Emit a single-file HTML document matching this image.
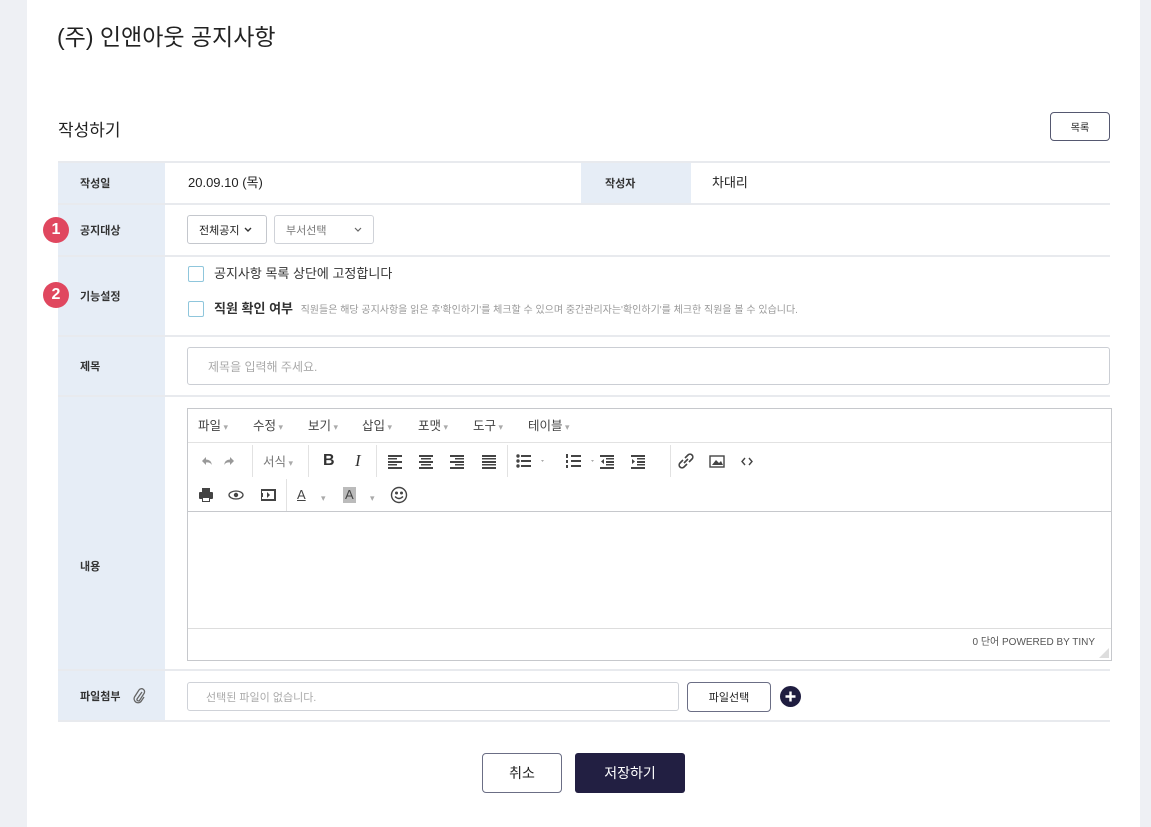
<!DOCTYPE html>
<html><head><meta charset="utf-8"><style>
*{margin:0;padding:0;box-sizing:border-box}
body{width:1151px;height:827px;background:#fff;position:relative;overflow:hidden;font-family:"Liberation Sans","Noto Sans CJK KR",sans-serif;color:#222}
.a{position:absolute}
.lbl{position:absolute;left:58px;width:107px;background:#e6edf6;font-size:11px;font-weight:bold;color:#333;display:flex;align-items:center;padding-left:22px}
.hl{position:absolute;left:58px;width:1052px;height:2px;background:#e8eaee}
.box{position:absolute;border:1px solid #cfd2d8;border-radius:3px;background:#fff;display:flex;align-items:center}
.cb{position:absolute;width:16px;height:16px;border:1.5px solid #8fc6dc;border-radius:2px;background:#fff}
.num{position:absolute;left:43px;width:26px;height:26px;border-radius:50%;background:#e0475f;color:#fff;font-size:16px;font-weight:bold;text-align:center;line-height:26px}
.tb{position:absolute;font-size:13px;color:#444;line-height:16px}
.m{position:absolute;top:9px;font-size:12.5px;color:#444;line-height:16px}
.g{color:#aaa;font-size:9px}
.sep{position:absolute;width:1px;height:32px;background:#e2e2e2}
svg.i{position:absolute}
</style></head><body>
<div class="a" style="left:0;top:0;width:27px;height:827px;background:#eef0f4"></div>
<div class="a" style="left:1140px;top:0;width:11px;height:827px;background:#eef0f4"></div>
<div class="a" style="left:57px;top:18px;font-size:23px;color:#222">(주) 인앤아웃 공지사항</div>
<div class="a" style="left:58px;top:116px;font-size:17px;color:#222">작성하기</div>
<div class="box" style="left:1050px;top:112px;width:60px;height:29px;border:1.5px solid #555870;border-radius:4px;font-size:10px;justify-content:center">목록</div>

<div class="lbl" style="top:162px;height:42px">작성일</div>
<div class="a" style="left:581px;top:162px;width:110px;height:42px;background:#e6edf6;font-size:11px;font-weight:bold;color:#333;padding-left:24px;display:flex;align-items:center">작성자</div>
<div class="lbl" style="top:204px;height:52px">공지대상</div>
<div class="lbl" style="top:256px;height:80px">기능설정</div>
<div class="lbl" style="top:336px;height:60px">제목</div>
<div class="lbl" style="top:396px;height:274px;padding-top:66px">내용</div>
<div class="lbl" style="top:670px;height:51px">파일첨부
<svg width="14" height="16" viewBox="0 0 14 16" style="margin-left:12px"><path d="M10 4 L5 11 a1.5 1.5 0 0 0 2.5 1.5 L12 5.5 a3 3 0 0 0 -5 -3.5 L2.5 9 a4 4 0 0 0 6.5 4.5 L12 9" fill="none" stroke="#666" stroke-width="1.3"/></svg></div>
<div class="hl" style="top:161px"></div><div class="hl" style="top:203px"></div><div class="hl" style="top:255px"></div><div class="hl" style="top:335px"></div><div class="hl" style="top:395px"></div><div class="hl" style="top:669px"></div><div class="hl" style="top:720px"></div>

<div class="a" style="left:188px;top:175px;font-size:13px;line-height:16px">20.09.10 (목)</div>
<div class="a" style="left:712px;top:175px;font-size:13px;line-height:16px">차대리</div>

<div class="num" style="top:217px">1</div>
<div class="num" style="top:282px">2</div>
<div class="box" style="left:187px;top:215px;width:80px;height:29px;border:1px solid #c4c7cd;font-size:11px;padding-left:11px">전체공지 <svg width="8" height="6" style="margin-left:5px"><path d="M1 1 L4 4 L7 1" fill="none" stroke="#333" stroke-width="1.4"/></svg></div>
<div class="box" style="left:274px;top:215px;width:100px;height:29px;font-size:11px;padding-left:11px;color:#777">부서선택 <svg width="8" height="6" style="margin-left:28px"><path d="M1 1 L4 4 L7 1" fill="none" stroke="#666" stroke-width="1.2"/></svg></div>

<div class="cb" style="left:188px;top:266px"></div>
<div class="a" style="left:214px;top:266px;font-size:13px;color:#333;line-height:16px">공지사항 목록 상단에 고정합니다</div>
<div class="cb" style="left:188px;top:301px"></div>
<div class="a" style="left:214px;top:301px;font-size:13px;color:#333;font-weight:bold;white-space:nowrap;line-height:16px">직원 확인 여부 <span style="font-weight:normal;font-size:10px;color:#999;margin-left:4px">직원들은 해당 공지사항을 읽은 후'확인하기'를 체크할 수 있으며 중간관리자는'확인하기'를 체크한 직원을 볼 수 있습니다.</span></div>

<div class="box" style="left:187px;top:347px;width:923px;height:38px;border:1.5px solid #cbced4;font-size:12px;color:#aaa;padding-left:20px">제목을 입력해 주세요.</div>

<div class="a" style="left:187px;top:408px;width:925px;height:253px;border:1px solid #c6c8cc;background:#fff">
 <div class="a" style="left:0;top:0;width:923px;height:34px;border-bottom:1px solid #e2e2e2"></div>
 <div class="a" style="left:0;top:102px;width:923px;height:1px;background:#c6c8cc"></div>
 <div class="a" style="left:0;top:219px;width:923px;height:1px;background:#ddd"></div>
 <div class="m" style="left:10px">파일<span class="g"> ▾</span></div>
 <div class="m" style="left:65px">수정<span class="g"> ▾</span></div>
 <div class="m" style="left:120px">보기<span class="g"> ▾</span></div>
 <div class="m" style="left:174px">삽입<span class="g"> ▾</span></div>
 <div class="m" style="left:230px">포맷<span class="g"> ▾</span></div>
 <div class="m" style="left:285px">도구<span class="g"> ▾</span></div>
 <div class="m" style="left:340px">테이블<span class="g"> ▾</span></div>
 <svg class="i" style="left:10px;top:44px" width="40" height="16"><path d="M4 8 L8 4 L8 6.5 Q13 6.5 14 12 Q12 9 8 9.5 L8 12 Z" fill="#999"/><path d="M36 8 L32 4 L32 6.5 Q27 6.5 26 12 Q28 9 32 9.5 L32 12 Z" fill="#999"/></svg>
 <div class="sep" style="left:64px;top:36px"></div>
 <div class="tb" style="left:75px;top:45px;color:#777;font-size:12.5px">서식<span class="g"> ▾</span></div>
 <div class="sep" style="left:120px;top:36px"></div>
 <div class="tb" style="left:135px;top:44px;font-weight:bold;font-size:16px;color:#333">B</div>
 <div class="tb" style="left:167px;top:44px;font-style:italic;font-family:'Liberation Serif';font-size:17px;color:#333">I</div>
 <div class="sep" style="left:188px;top:36px"></div>
 <svg class="i" style="left:200px;top:44px" width="112" height="16" fill="#444">
  <rect x="0" y="2" width="14" height="2"/><rect x="0" y="5" width="9" height="1.5"/><rect x="0" y="8" width="14" height="2"/><rect x="0" y="11" width="9" height="1.5"/><rect x="0" y="14" width="14" height="2"/>
  <rect x="31" y="2" width="14" height="2"/><rect x="33" y="5" width="10" height="1.5"/><rect x="31" y="8" width="14" height="2"/><rect x="33" y="11" width="10" height="1.5"/><rect x="31" y="14" width="14" height="2"/>
  <rect x="62" y="2" width="14" height="2"/><rect x="67" y="5" width="9" height="1.5"/><rect x="62" y="8" width="14" height="2"/><rect x="67" y="11" width="9" height="1.5"/><rect x="62" y="14" width="14" height="2"/>
  <rect x="94" y="2" width="14" height="2"/><rect x="94" y="5" width="14" height="1.5"/><rect x="94" y="8" width="14" height="2"/><rect x="94" y="11" width="14" height="1.5"/><rect x="94" y="14" width="14" height="2"/>
 </svg>
 <div class="sep" style="left:319px;top:36px"></div>
 <svg class="i" style="left:328px;top:44px" width="150" height="16" fill="#444">
  <circle cx="2" cy="3" r="1.7"/><circle cx="2" cy="8" r="1.7"/><circle cx="2" cy="13" r="1.7"/><rect x="5" y="2" width="10" height="2"/><rect x="5" y="7" width="10" height="2"/><rect x="5" y="12" width="10" height="2"/>
  <path d="M25 7 L28 7 L26.5 9Z" fill="#aaa"/>
  <rect x="50" y="1" width="2" height="4"/><rect x="50" y="7" width="2" height="3"/><rect x="50" y="12" width="2" height="3"/><rect x="55" y="2" width="10" height="2"/><rect x="55" y="7" width="10" height="2"/><rect x="55" y="12" width="10" height="2"/>
  <path d="M75 7 L78 7 L76.5 9Z" fill="#aaa"/>
  <rect x="84" y="2" width="14" height="2"/><rect x="90" y="5" width="8" height="1.5"/><rect x="90" y="8" width="8" height="2"/><rect x="90" y="11" width="8" height="1.5"/><rect x="84" y="14" width="14" height="2"/><path d="M88 6 L85 8.5 L88 11Z"/>
  <rect x="115" y="2" width="14" height="2"/><rect x="121" y="5" width="8" height="1.5"/><rect x="121" y="8" width="8" height="2"/><rect x="121" y="11" width="8" height="1.5"/><rect x="115" y="14" width="14" height="2"/><path d="M116 6 L119 8.5 L116 11Z"/>
 </svg>
 <div class="sep" style="left:482px;top:36px"></div>
 <svg class="i" style="left:490px;top:44px" width="80" height="16" fill="none" stroke="#444" stroke-width="1.6">
  <path d="M7 5 L10 2 a2.5 2.5 0 0 1 4 4 L11 9"/><path d="M9 11 L6 14 a2.5 2.5 0 0 1 -4 -4 L5 7"/><path d="M6 10 L10 6"/>
  <rect x="32" y="3" width="14" height="11" stroke-width="1.4"/><path d="M34 12 L38 7 L41 10 L43 8 L45 12Z" fill="#444" stroke="none"/>
  <path d="M67 5 L64 8.5 L67 12 M71 5 L74 8.5 L71 12" stroke-width="1.4"/>
 </svg>
 <svg class="i" style="left:10px;top:78px" width="80" height="16">
  <rect x="4" y="1" width="8" height="4" fill="#444"/><rect x="1" y="5" width="14" height="7" rx="1" fill="#444"/><rect x="4" y="10" width="8" height="5" fill="#444"/><rect x="5" y="11" width="6" height="3" fill="#fff"/>
  <ellipse cx="38" cy="8" rx="7" ry="4" fill="none" stroke="#444" stroke-width="1.3"/><circle cx="38" cy="8" r="2.2" fill="#444"/>
  <rect x="63" y="2" width="15" height="12" fill="#444"/><rect x="65" y="4" width="11" height="8" fill="#fff"/><path d="M69 5 L72 8 L69 11Z" fill="#444"/><rect x="64" y="4" width="1" height="2" fill="#fff"/><rect x="64" y="10" width="1" height="2" fill="#fff"/>
 </svg>
 <div class="sep" style="left:98px;top:70px"></div>
 <div class="tb" style="left:109px;top:78px;text-decoration:underline;font-size:13px">A</div><div class="tb g" style="left:133px;top:81px">▾</div>
 <div class="tb" style="left:155px;top:78px;background:#bbb;padding:0 2px;font-size:13px">A</div><div class="tb g" style="left:182px;top:81px">▾</div>
 <svg class="i" style="left:202px;top:77px" width="18" height="18" fill="none" stroke="#444" stroke-width="1.4"><circle cx="9" cy="9" r="7.5"/><circle cx="6.5" cy="7" r=".8" fill="#444"/><circle cx="11.5" cy="7" r=".8" fill="#444"/><path d="M5 10.5 Q9 14.5 13 10.5"/></svg>
 <div class="a" style="right:16px;top:228px;font-size:10px;color:#555;line-height:12px">0 단어 POWERED BY TINY</div>
 <svg class="i" style="right:2px;bottom:2px" width="10" height="10"><path d="M10 0 L10 10 L0 10Z" fill="#ddd"/></svg>
</div>

<div class="box" style="left:187px;top:682px;width:492px;height:29px;font-size:11px;color:#aaa;padding-left:18px">선택된 파일이 없습니다.</div>
<div class="box" style="left:687px;top:682px;width:84px;height:30px;border:1.5px solid #6b6e85;border-radius:4px;font-size:11px;justify-content:center">파일선택</div>
<svg class="i" style="left:780px;top:686px" width="21" height="21"><circle cx="10.5" cy="10.5" r="10.5" fill="#1f1d40"/><path d="M10.5 5.5 V15.5 M5.5 10.5 H15.5" stroke="#fff" stroke-width="2.4"/></svg>

<div class="box" style="left:482px;top:753px;width:80px;height:40px;border:1.5px solid #6b6e85;border-radius:4px;font-size:14px;justify-content:center">취소</div>
<div class="a" style="left:575px;top:753px;width:110px;height:40px;background:#221f42;border-radius:3px;color:#fff;font-size:14px;display:flex;align-items:center;justify-content:center">저장하기</div>
</body></html>
